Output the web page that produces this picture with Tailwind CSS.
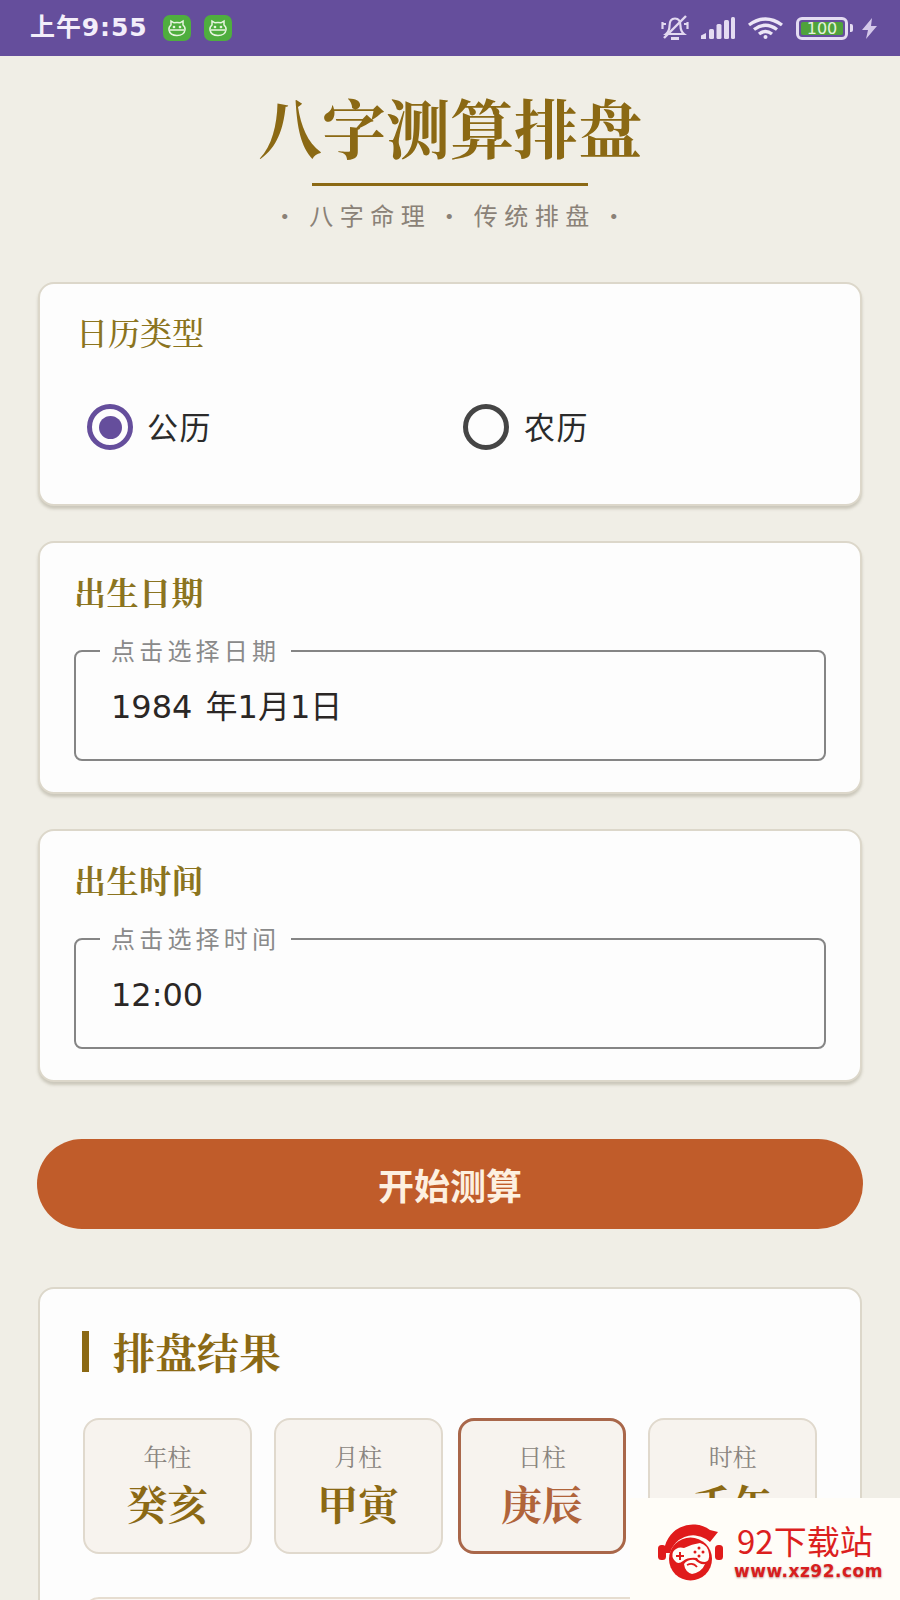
<!DOCTYPE html>
<html lang="zh">
<head>
<meta charset="utf-8">
<script src="https://cdn.jsdelivr.net/npm/@tailwindcss/browser@4"></script>
</head>
<body>
<div class="relative w-[900px] h-[1600px] overflow-hidden bg-[#f0eee6] font-['Noto_Sans_CJK_SC',sans-serif]">

  <!-- status bar -->
  <div class="h-[56px] bg-[#654e9c] flex items-center text-[#f3eefa] relative">
    <span class="ml-[30px] text-[25px] leading-[30px] font-bold tracking-[0.9px] font-['DejaVu_Sans','Noto_Sans_CJK_SC',sans-serif]">上午9:55</span>
    <div class="ml-[15px] w-[28px] h-[26px] rounded-[7px] bg-[#4fae3e] flex items-center justify-center">
      <svg width="20" height="18" viewBox="0 0 20 18" fill="none" stroke="#e8f5e0" stroke-width="1.500"><path d="M4 6 L4 2 L7 3.800 Q10 3.200 13 3.800 L16 2 L16 6 Q18.500 8 18 11 Q17 16.500 10 16.500 Q3 16.500 2 11 Q1.500 8 4 6Z"/><path d="M3 11 H17"/><circle cx="7" cy="8" r=".6"/><circle cx="13" cy="8" r=".6"/></svg>
    </div>
    <div class="ml-[13px] w-[28px] h-[26px] rounded-[7px] bg-[#4fae3e] flex items-center justify-center">
      <svg width="20" height="18" viewBox="0 0 20 18" fill="none" stroke="#e8f5e0" stroke-width="1.500"><path d="M4 6 L4 2 L7 3.800 Q10 3.200 13 3.800 L16 2 L16 6 Q18.500 8 18 11 Q17 16.500 10 16.500 Q3 16.500 2 11 Q1.500 8 4 6Z"/><path d="M3 11 H17"/><circle cx="7" cy="8" r=".6"/><circle cx="13" cy="8" r=".6"/></svg>
    </div>
    <div class="ml-auto flex items-center h-full">
      <svg class="w-[30px] h-[26px]" viewBox="0 0 30 26" fill="none" stroke="#e2d9f0" stroke-width="2.200"><path d="M6 19 Q9.500 16 9.500 11 Q9.500 3.500 15 3.500 Q20.500 3.500 20.500 11 Q20.500 16 24 19 Z"/><path d="M11 23.500 H19" stroke-width="3"/><path d="M2.500 7 V14 M27.500 7 V14 M2 9 H6 M24 9 H28"/><path d="M4 23 L26 1" stroke-width="2.400"/></svg>
      <svg class="ml-[10px] w-[35px] h-[24px]" viewBox="0 0 35 24" fill="#e4dcf2"><path d="M1 23 V19.500 L6 17 V23 Z"/><rect x="9" y="13" width="5" height="10" rx="1.500"/><rect x="16.500" y="8" width="5" height="15" rx="1.500"/><rect x="24" y="4" width="5" height="19" rx="1.500"/><rect x="31" y="1" width="4" height="22" rx="1.500"/></svg>
      <svg class="ml-[12px] w-[37px] h-[24px]" viewBox="0 0 37 24" fill="none" stroke="#ece6f6" stroke-width="3.400"><path d="M2 9 Q18.500 -3 35 9"/><path d="M7 13.500 Q18.500 5 30 13.500"/><path d="M12 18 Q18.500 13 25 18"/><circle cx="18.500" cy="21" r="2" fill="#ece6f6" stroke="none"/></svg>
      <div class="ml-[12px] w-[52px] h-[23px] rounded-[6px] border-[3px] border-[#e4dcf2] p-[2px] flex">
        <div class="flex-1 bg-[#4fa23c] rounded-[2px] flex items-center justify-center text-[16px] leading-[17px] text-[#e4f2dc] font-['DejaVu_Sans',sans-serif]">100</div>
      </div>
      <div class="ml-[2px] w-[3px] h-[8px] bg-[#e4dcf2] rounded-r-[2px]"></div>
      <svg class="ml-[9px] mr-[23px] w-[15px] h-[21px]" viewBox="0 0 15 21" fill="#d4c8ea"><path d="M10 0 L0 12 H6 L4 21 L15 8 H9 Z"/></svg>
    </div>
  </div>

  <!-- heading -->
  <div class="flex flex-col items-center">
    <h1 class="mt-[37px] mb-[4px] text-[64px] leading-[64px] font-bold text-[#8b6914] font-['Noto_Serif_CJK_SC','Noto_Sans_CJK_SC',serif]">八字测算排盘</h1>
    <div class="mt-[22px] w-[276px] h-[3px] bg-[#8b6914]"></div>
    <p class="mt-[13px] mb-[1px] pl-[5px] text-[24px] leading-[32px] tracking-[6.500px] text-[#8a8177] whitespace-nowrap flex gap-[6px]"><span>·</span><span>八字命理</span><span>·</span><span>传统排盘</span><span>·</span></p>
  </div>

  <div class="px-[38px]">
    <!-- calendar type -->
    <section class="mt-[50px] rounded-[16px] border-2 border-[#dcd7ca] bg-[#fdfdfd] shadow-[0_3px_3px_rgba(120,112,90,0.3)] pt-[27px] px-[37px] pb-[54px]">
      <h2 class="-ml-[1px] text-[32px] leading-[40px] font-medium text-[#8b7420] font-['Noto_Serif_CJK_SC','Noto_Sans_CJK_SC',serif]">日历类型</h2>
      <div class="mt-[53px] ml-[10px] flex">
        <div class="w-[376px] flex items-center gap-[14px]">
          <span class="w-[46px] h-[46px] rounded-full border-[5px] border-[#654e9c] flex items-center justify-center"><span class="w-[23px] h-[23px] rounded-full bg-[#654e9c]"></span></span>
          <span class="-mt-[3px] text-[31px] leading-[40px] tracking-[1.500px] text-[#2b2b2b]">公历</span>
        </div>
        <div class="flex items-center gap-[15px]">
          <span class="w-[46px] h-[46px] rounded-full border-[5px] border-[#454545]"></span>
          <span class="-mt-[3px] text-[31px] leading-[40px] tracking-[1.500px] text-[#2b2b2b]">农历</span>
        </div>
      </div>
    </section>

    <!-- date -->
    <section class="mt-[35px] rounded-[16px] border-2 border-[#dcd7ca] bg-[#fdfdfd] shadow-[0_3px_3px_rgba(120,112,90,0.3)] pt-[28px] px-[34px] pb-[31px]">
      <h2 class="text-[32px] leading-[40px] tracking-[0.500px] font-bold text-[#8b7420] font-['Noto_Serif_CJK_SC','Noto_Sans_CJK_SC',serif]">出生日期</h2>
      <div class="relative mt-[39px] h-[111px] rounded-[8px] border-2 border-[#858585] flex items-center pl-[35px] pt-[3px]">
        <span class="absolute left-[24px] top-[-14px] bg-[#fdfdfd] px-[11px] text-[24px] leading-[24px] tracking-[4.200px] text-[#8a8a8a] whitespace-nowrap">点击选择日期</span>
        <span class="text-[32px] leading-[40px] text-[#2b2725] [word-spacing:3px] font-['DejaVu_Sans','Noto_Sans_CJK_SC',sans-serif]">1984 年1月1日</span>
      </div>
    </section>

    <!-- time -->
    <section class="mt-[35px] rounded-[16px] border-2 border-[#dcd7ca] bg-[#fdfdfd] shadow-[0_3px_3px_rgba(120,112,90,0.3)] pt-[28px] px-[34px] pb-[31px]">
      <h2 class="text-[32px] leading-[40px] tracking-[0.500px] font-bold text-[#8b7420] font-['Noto_Serif_CJK_SC','Noto_Sans_CJK_SC',serif]">出生时间</h2>
      <div class="relative mt-[39px] h-[111px] rounded-[8px] border-2 border-[#858585] flex items-center pl-[35px] pt-[3px]">
        <span class="absolute left-[24px] top-[-14px] bg-[#fdfdfd] px-[11px] text-[24px] leading-[24px] tracking-[4.200px] text-[#8a8a8a] whitespace-nowrap">点击选择时间</span>
        <span class="text-[32px] leading-[40px] text-[#2b2725] font-['DejaVu_Sans','Noto_Sans_CJK_SC',sans-serif]">12:00</span>
      </div>
    </section>

    <!-- button -->
    <button class="mt-[57px] -mx-[1px] w-[826px] h-[90px] rounded-full bg-[#c05c2a] text-[36px] leading-[44px] font-bold text-[#fdf0e0] block">开始测算</button>

    <!-- result -->
    <section class="mt-[58px] h-[400px] rounded-[16px] border-2 border-[#dcd7ca] bg-[#fdfdfd] pt-[42px] px-[43px]">
      <div class="flex items-center h-[41px]">
        <span class="-ml-[1px] w-[7px] h-[41px] bg-[#8b6914]"></span>
        <h2 class="ml-[24px] text-[42px] leading-[41px] font-bold text-[#8b6914] font-['Noto_Serif_CJK_SC','Noto_Sans_CJK_SC',serif]">排盘结果</h2>
      </div>
      <div class="mt-[46px] flex font-['Noto_Serif_CJK_SC','Noto_Sans_CJK_SC',serif]">
        <div class="w-[169px] h-[136px] rounded-[16px] border-2 border-[#e0d9cd] bg-[#f7f3ee] flex flex-col items-center pt-[20px]">
          <span class="text-[24px] leading-[32px] text-[#8a8580]">年柱</span>
          <span class="mt-[6px] text-[41px] leading-[50px] font-bold text-[#8b6914]">癸亥</span>
        </div>
        <div class="ml-[22px] w-[169px] h-[136px] rounded-[16px] border-2 border-[#e0d9cd] bg-[#f7f3ee] flex flex-col items-center pt-[20px]">
          <span class="text-[24px] leading-[32px] text-[#8a8580]">月柱</span>
          <span class="mt-[6px] text-[41px] leading-[50px] font-bold text-[#8b6914]">甲寅</span>
        </div>
        <div class="ml-[15px] w-[169px] h-[136px] rounded-[16px] border-[3px] border-[#a9674a] bg-[#f7f3ee] flex flex-col items-center pt-[19px]">
          <span class="text-[24px] leading-[32px] text-[#8a8580]">日柱</span>
          <span class="mt-[6px] text-[41px] leading-[50px] font-bold text-[#b0643a]">庚辰</span>
        </div>
        <div class="ml-[22px] w-[169px] h-[136px] rounded-[16px] border-2 border-[#e0d9cd] bg-[#f7f3ee] flex flex-col items-center pt-[20px]">
          <span class="text-[24px] leading-[32px] text-[#8a8580]">时柱</span>
          <span class="mt-[6px] text-[41px] leading-[50px] font-bold text-[#8b6914]">壬午</span>
        </div>
      </div>
      <div class="mt-[43px] w-[734px] h-[60px] rounded-t-[16px] border-2 border-[#e6ddd0] bg-[#fbf8f4]"></div>
    </section>
  </div>

  <!-- watermark -->
  <div class="absolute left-[630px] top-[1498px] w-[270px] h-[102px] bg-[#fffdf8]">
    <svg class="absolute left-[20px] top-[17px] w-[80px] h-[75px]" viewBox="0 0 80 75">
      <path d="M14 38 A29 29 0 0 1 60 15 L68 17 L60 27 L56 24 A24 24 0 0 0 20 38 Z" fill="#e01b1b"/>
      <rect x="8" y="30" width="8" height="15" rx="3.500" fill="#e01b1b"/>
      <rect x="65" y="30" width="8" height="15" rx="3.500" fill="#e01b1b"/>
      <circle cx="40.500" cy="44" r="21.500" fill="#e01b1b"/>
      <path d="M23 37 Q27 31 34 33 Q42 29 50 28 Q58 30 59 39 Q60 46 55 47 Q49 47 47 43 Q38 42 33 46 Q28 50 25 46 Q21 42 23 37Z" fill="#fffdf8"/>
      <path d="M34 49 Q38 44 45 45 Q50 50 55 49 Q52 57 42 59 Q35 57 34 49Z" fill="#fffdf8"/>
      <path d="M37 50 Q43 47 47 52" fill="none" stroke="#e01b1b" stroke-width="1.800"/>
      <path d="M26 41 H34 M30 37 V45" stroke="#e01b1b" stroke-width="2"/>
      <circle cx="49" cy="33" r="1.500" fill="#e01b1b"/><circle cx="53" cy="37" r="1.500" fill="#e01b1b"/><circle cx="45" cy="37" r="1.500" fill="#e01b1b"/><circle cx="49" cy="41" r="1.500" fill="#e01b1b"/>
    </svg>
    <span class="absolute left-[107px] top-[21px] text-[33px] leading-[42px] text-[#dc1f1f] whitespace-nowrap">92下载站</span>
    <span class="absolute left-[104px] top-[62px] text-[17px] leading-[22px] font-bold text-[#d81e1e] tracking-[0.500px] [text-shadow:0_1px_2px_rgba(120,40,40,0.5)] whitespace-nowrap font-['DejaVu_Sans',sans-serif]">www.xz92.com</span>
  </div>
</div>
</body>
</html>
